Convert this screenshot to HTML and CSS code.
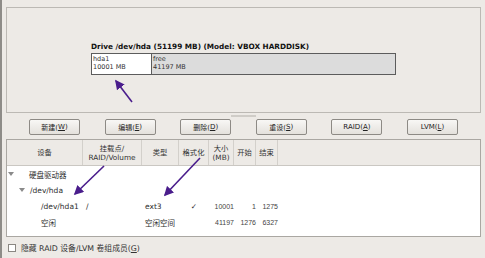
FILE: index.html
```html
<!doctype html>
<html lang="zh">
    <head>
        <meta charset="UTF-8" />
        <title>分区</title>
        <link rel="stylesheet" href="styles.css">
    </head>
    <body>
        <div class="window">
            <div class="disk-panel">
                <div class="drive">
                    <div class="drive-label">Drive /dev/hda (51199 MB) (Model: VBOX HARDDISK)</div>
                    <div class="drive-bar">
                        <div class="part part-used">hda1<br>10001 MB</div>
                        <div class="part part-free">free<br>41197 MB</div>
                    </div>
                </div>
            </div>

            <div class="pane-handle"><span></span></div>

            <div class="actions">
                <button class="btn">新建(<u>W</u>)</button>
                <button class="btn">编辑(<u>E</u>)</button>
                <button class="btn">删除(<u>D</u>)</button>
                <button class="btn">重设(<u>S</u>)</button>
                <button class="btn">RAID(<u>A</u>)</button>
                <button class="btn">LVM(<u>L</u>)</button>
            </div>

            <div class="partitions">
                <div class="thead">
                    <div class="th">设备</div>
                    <div class="th">挂载点/<br>RAID/Volume</div>
                    <div class="th">类型</div>
                    <div class="th">格式化</div>
                    <div class="th">大小<br>(MB)</div>
                    <div class="th">开始</div>
                    <div class="th">结束</div>
                    <div class="th th-last"></div>
                </div>
                <div class="tbody">
                    <div class="row">
                        <div class="tree tree-root"><i class="expander"></i>硬盘驱动器</div>
                    </div>
                    <div class="row">
                        <div class="tree tree-disk"><i class="expander"></i>/dev/hda</div>
                    </div>
                    <div class="row">
                        <div class="td td-dev">/dev/hda1</div>
                        <div class="td">/</div>
                        <div class="td">ext3</div>
                        <div class="td td-check">✓</div>
                        <div class="td td-num">10001</div>
                        <div class="td td-num">1</div>
                        <div class="td td-num">1275</div>
                    </div>
                    <div class="row">
                        <div class="td td-dev">空闲</div>
                        <div class="td"></div>
                        <div class="td">空闲空间</div>
                        <div class="td"></div>
                        <div class="td td-num">41197</div>
                        <div class="td td-num">1276</div>
                        <div class="td td-num">6327</div>
                    </div>
                </div>
            </div>

            <label class="hide-opt">
                <span class="checkbox"></span>
                <span>隐藏 RAID 设备/LVM 卷组成员(<u>G</u>)</span>
            </label>

            <svg class="annotations" width="485" height="258" viewBox="0 0 485 258">
                <defs>
                    <marker id="head" markerWidth="6" markerHeight="6" refX="5" refY="3" orient="auto" markerUnits="strokeWidth">
                        <path d="M0,0 L6,3 L0,6 Z" fill="#4a1d8c" />
                    </marker>
                </defs>
                <line x1="132" y1="102" x2="116" y2="81" stroke="#4a1d8c" stroke-width="1.6" marker-end="url(#head)" />
                <line x1="104" y1="166" x2="75" y2="194" stroke="#4a1d8c" stroke-width="1.6" marker-end="url(#head)" />
                <line x1="200" y1="158" x2="165" y2="195" stroke="#4a1d8c" stroke-width="1.6" marker-end="url(#head)" />
            </svg>
        </div>
    </body>
</html>
```

FILE: styles.css
```css
* {
    margin: 0;
    padding: 0;
    box-sizing: border-box;
}

body {
    font-family: "DejaVu Sans", "Noto Sans CJK SC", sans-serif;
    font-size: 7.5px;
    color: #2e2e2e;
    background: #edeae6;
}

.window {
    position: relative;
    width: 485px;
    height: 258px;
    border-left: 2px solid #8e8c88;
    padding: 7px 4px 0 4px;
    display: flex;
    flex-direction: column;
}

/* disk overview */
.disk-panel {
    height: 106px;
    border: 1px solid #bcb9b4;
    display: flex;
    align-items: center;
    justify-content: center;
    padding-bottom: 4px;
}

.drive {
    width: 305px;
}

.drive-label {
    font-weight: bold;
    font-size: 7.3px;
    color: #111;
    margin-bottom: 2px;
    white-space: nowrap;
}

.drive-bar {
    display: flex;
    height: 22px;
    border: 1px solid #5c5c5c;
}

.part {
    font-size: 6.5px;
    line-height: 8px;
    padding: 1px 1px;
    color: #333;
}

.part-used {
    width: 60px;
    background: #fff;
    border-right: 1px solid #5c5c5c;
}

.part-free {
    flex: 1;
    background: #dcdcdc;
}

.pane-handle {
    height: 6px;
    display: flex;
    align-items: center;
    justify-content: center;
}

.pane-handle span {
    width: 25px;
    height: 2px;
    background: #cfccc7;
}

/* buttons */
.actions {
    display: flex;
    justify-content: center;
    gap: 24.6px;
    height: 16px;
}

.btn {
    width: 51px;
    height: 16px;
    border: 1px solid #8d8a85;
    border-radius: 2px;
    background: linear-gradient(#f8f7f5, #e4e1dc);
    font-family: "DejaVu Sans", "Noto Sans CJK SC", sans-serif;
    font-size: 7px;
    color: #222;
    display: flex;
    align-items: center;
    justify-content: center;
}

/* partition table */
.partitions {
    margin-top: 4px;
    height: 98px;
    border: 1px solid #aaa7a2;
    background: #fff;
    display: flex;
    flex-direction: column;
}

.thead,
.row {
    display: grid;
    grid-template-columns: 76px 59px 37px 30px 25px 22px 22px 1fr;
}

.thead {
    height: 26px;
    background: #edeae6;
    border-bottom: 1px solid #cac7c2;
}

.th {
    border-right: 1px solid #d3d0cb;
    display: flex;
    align-items: center;
    justify-content: center;
    text-align: center;
    line-height: 9px;
    font-size: 7.3px;
    color: #333;
}

.th-last {
    border-right: none;
}

.row {
    height: 16px;
    align-items: center;
    white-space: nowrap;
}

.tree {
    grid-column: 1 / -1;
    display: flex;
    align-items: center;
    font-size: 7.5px;
}

.expander {
    width: 0;
    height: 0;
    border-left: 3px solid transparent;
    border-right: 3px solid transparent;
    border-top: 4px solid #8a8a8a;
}

.tree-root .expander {
    margin: 0 15px 0 1px;
}

.tree-disk .expander {
    margin: 0 5px 0 12px;
}

.td {
    padding-left: 3px;
    font-size: 7.5px;
}

.td-dev {
    padding-left: 34px;
}

.td-check {
    text-align: center;
    padding-left: 0;
}

.td-num {
    text-align: right;
    padding: 0;
    font-family: "Liberation Sans", sans-serif;
    font-size: 7px;
    color: #444;
}

/* bottom option */
.hide-opt {
    flex: 1;
    display: flex;
    align-items: center;
    gap: 5px;
    padding-left: 2px;
    font-size: 7.8px;
    color: #333;
}

.checkbox {
    width: 8px;
    height: 8px;
    border: 1px solid #8a8782;
    background: #fff;
}

.annotations {
    position: absolute;
    left: -2px;
    top: 0;
    pointer-events: none;
}
```
